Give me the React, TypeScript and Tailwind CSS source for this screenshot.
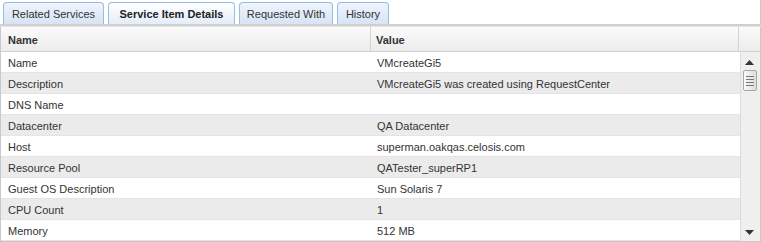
const tabs = [
  { label: "Related Services", active: false, w: "w-[101px]" },
  { label: "Service Item Details", active: true, w: "w-[127px]" },
  { label: "Requested With", active: false, w: "w-[94px]" },
  { label: "History", active: false, w: "w-[52px]" },
];

const rows: [string, string][] = [
  ["Name", "VMcreateGi5"],
  ["Description", "VMcreateGi5 was created using RequestCenter"],
  ["DNS Name", ""],
  ["Datacenter", "QA Datacenter"],
  ["Host", "superman.oakqas.celosis.com"],
  ["Resource Pool", "QATester_superRP1"],
  ["Guest OS Description", "Sun Solaris 7"],
  ["CPU Count", "1"],
  ["Memory", "512 MB"],
];

const App = () => {
  return (
    <div className="w-[761px] h-[242px] overflow-hidden bg-white font-['Liberation_Sans',Arial,sans-serif] text-[11px] text-[#333]">
      <div className="flex h-[24px] items-end gap-[4px] border-r border-[#c8c8c8] pl-[3px]">
        {tabs.map((t) => (
          <div
            key={t.label}
            className={`${t.w} flex h-[22px] items-center justify-center rounded-t-[4px] border border-b-0 border-[#99bbe8] pt-px ${
              t.active
                ? "bg-gradient-to-b from-[#ffffff] to-[#e3edf9] font-bold text-[#222]"
                : "bg-gradient-to-b from-[#eef4fc] to-[#d6e4f5] text-[#333]"
            }`}
          >
            {t.label}
          </div>
        ))}
      </div>
      <div className="h-[3px] border-t-2 border-[#cfcfcf] bg-[#e6e6e6]" />
      <div className="border-x border-b border-[#c8c8c8]">
        <div className="flex h-[25px] border-b border-[#d0d0d0] bg-gradient-to-b from-[#fbfbfb] to-[#ececec] font-bold text-[#333]">
          <div className="flex w-[370px] items-center border-r border-[#d4d4d4] pl-[7px] pt-[2px]">Name</div>
          <div className="flex w-[368px] items-center border-r border-[#d4d4d4] pl-[5px] pt-[2px]">Value</div>
          <div className="flex-1" />
        </div>
        <div className="flex">
          <div className="w-[739px]">
            {rows.map(([k, v], i) => (
              <div
                key={k}
                className={`flex h-[21px] items-center border-b border-[#e4e4e4] pt-[2px] ${
                  i % 2 === 1 ? "bg-[#ebebeb]" : "bg-white"
                }`}
              >
                <div className="w-[371px] pl-[7px]">{k}</div>
                <div className="pl-[5px]">{v}</div>
              </div>
            ))}
          </div>
          <div className="relative flex-1 border-l border-[#dcdcdc] bg-[#efefef]">
            <svg className="absolute left-[4px] top-[8px]" width="9" height="5" viewBox="0 0 9 5">
              <path d="M4.5 0 L9 5 L0 5 Z" fill="#333" />
            </svg>
            <div className="absolute left-[2px] top-[18px] flex h-[21px] w-[14px] flex-col items-center justify-center gap-[2px] rounded-[2px] border border-[#a8a8a8] bg-gradient-to-r from-[#fafafa] to-[#dcdcdc]">
              <div className="h-px w-[8px] bg-[#777]" />
              <div className="h-px w-[8px] bg-[#777]" />
              <div className="h-px w-[8px] bg-[#777]" />
              <div className="h-px w-[8px] bg-[#777]" />
            </div>
            <svg className="absolute left-[4px] bottom-[6px]" width="9" height="5" viewBox="0 0 9 5">
              <path d="M0 0 L9 0 L4.5 5 Z" fill="#333" />
            </svg>
          </div>
        </div>
      </div>
    </div>
  );
};

export default App;
